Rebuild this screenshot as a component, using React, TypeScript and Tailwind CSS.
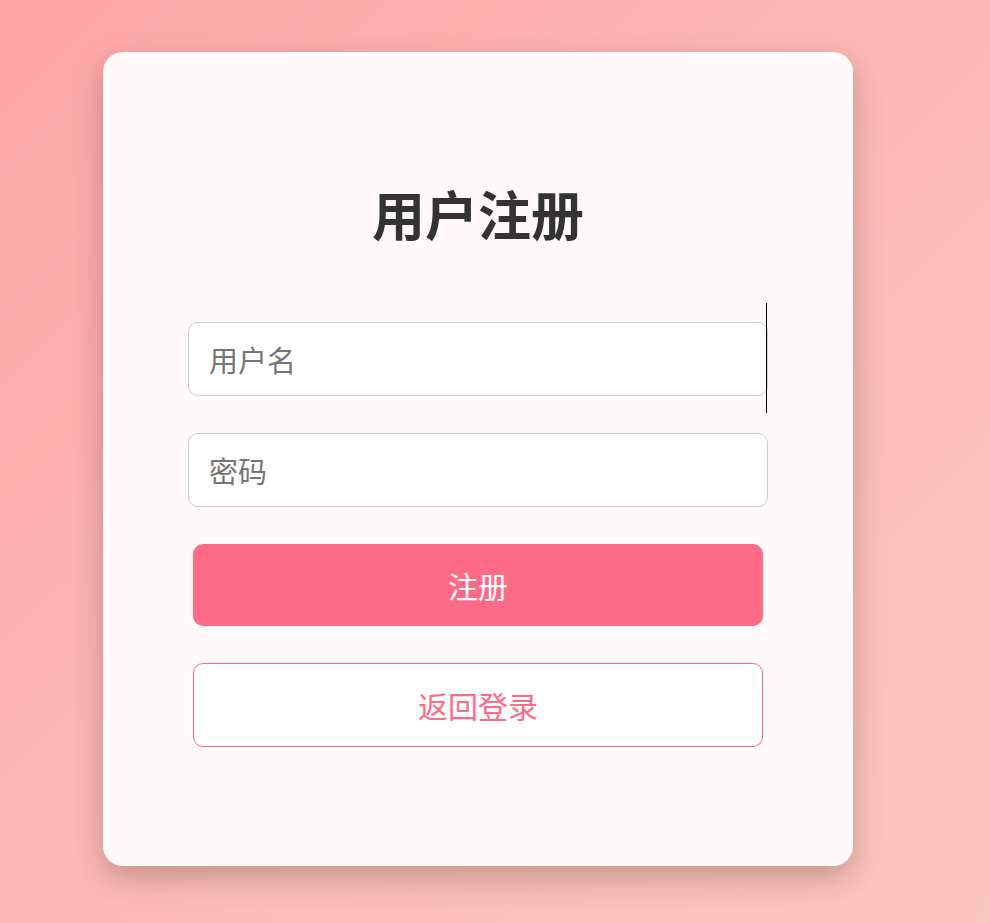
import { useState } from 'react';

export default function App() {
    const [username, setUsername] = useState('');
    const [password, setPassword] = useState('');

    return (
        <div
            className="min-h-[923px] w-full bg-[linear-gradient(135deg,#fea5a6_0%,#fcbdb6_60%,#fbc6bd_100%)] pt-[52px] pl-[103px]"
            style={{ fontFamily: '"Noto Sans CJK SC", "Noto Sans", sans-serif' }}
        >
            <div className="relative w-[750px] rounded-[20px] bg-[#fffaf9] pt-[131px] pb-[119px] shadow-[0_12px_32px_rgba(0,0,0,0.22)]">
                <h2 className="text-center text-[53px] font-bold leading-[60px] text-[#333]">用户注册</h2>

                {/* caret line */}
                <div className="absolute left-[663px] top-[251px] h-[110px] w-px bg-black" />

                <form className="mt-[79px] flex flex-col items-center" onSubmit={(e) => e.preventDefault()}>
                    <input
                        type="text"
                        placeholder="用户名"
                        value={username}
                        onChange={(e) => setUsername(e.target.value)}
                        className="h-[74px] w-[580px] rounded-[10px] border border-[#ccc] bg-white px-5 text-[29px] text-[#333] outline-none placeholder:text-[#757575]"
                    />
                    <input
                        type="password"
                        placeholder="密码"
                        value={password}
                        onChange={(e) => setPassword(e.target.value)}
                        className="mt-[37px] h-[74px] w-[580px] rounded-[10px] border border-[#ccc] bg-white px-5 text-[29px] text-[#333] outline-none placeholder:text-[#757575]"
                    />
                    <button
                        type="submit"
                        className="mt-[37px] h-[82px] w-[570px] rounded-[10px] bg-[#ff6b87] text-[30px] text-white"
                    >
                        注册
                    </button>
                    <button
                        type="button"
                        className="mt-[37px] h-[84px] w-[570px] rounded-[10px] border border-[#ff6b87] bg-white text-[30px] text-[#ff6b87]"
                    >
                        返回登录
                    </button>
                </form>
            </div>
        </div>
    );
}
